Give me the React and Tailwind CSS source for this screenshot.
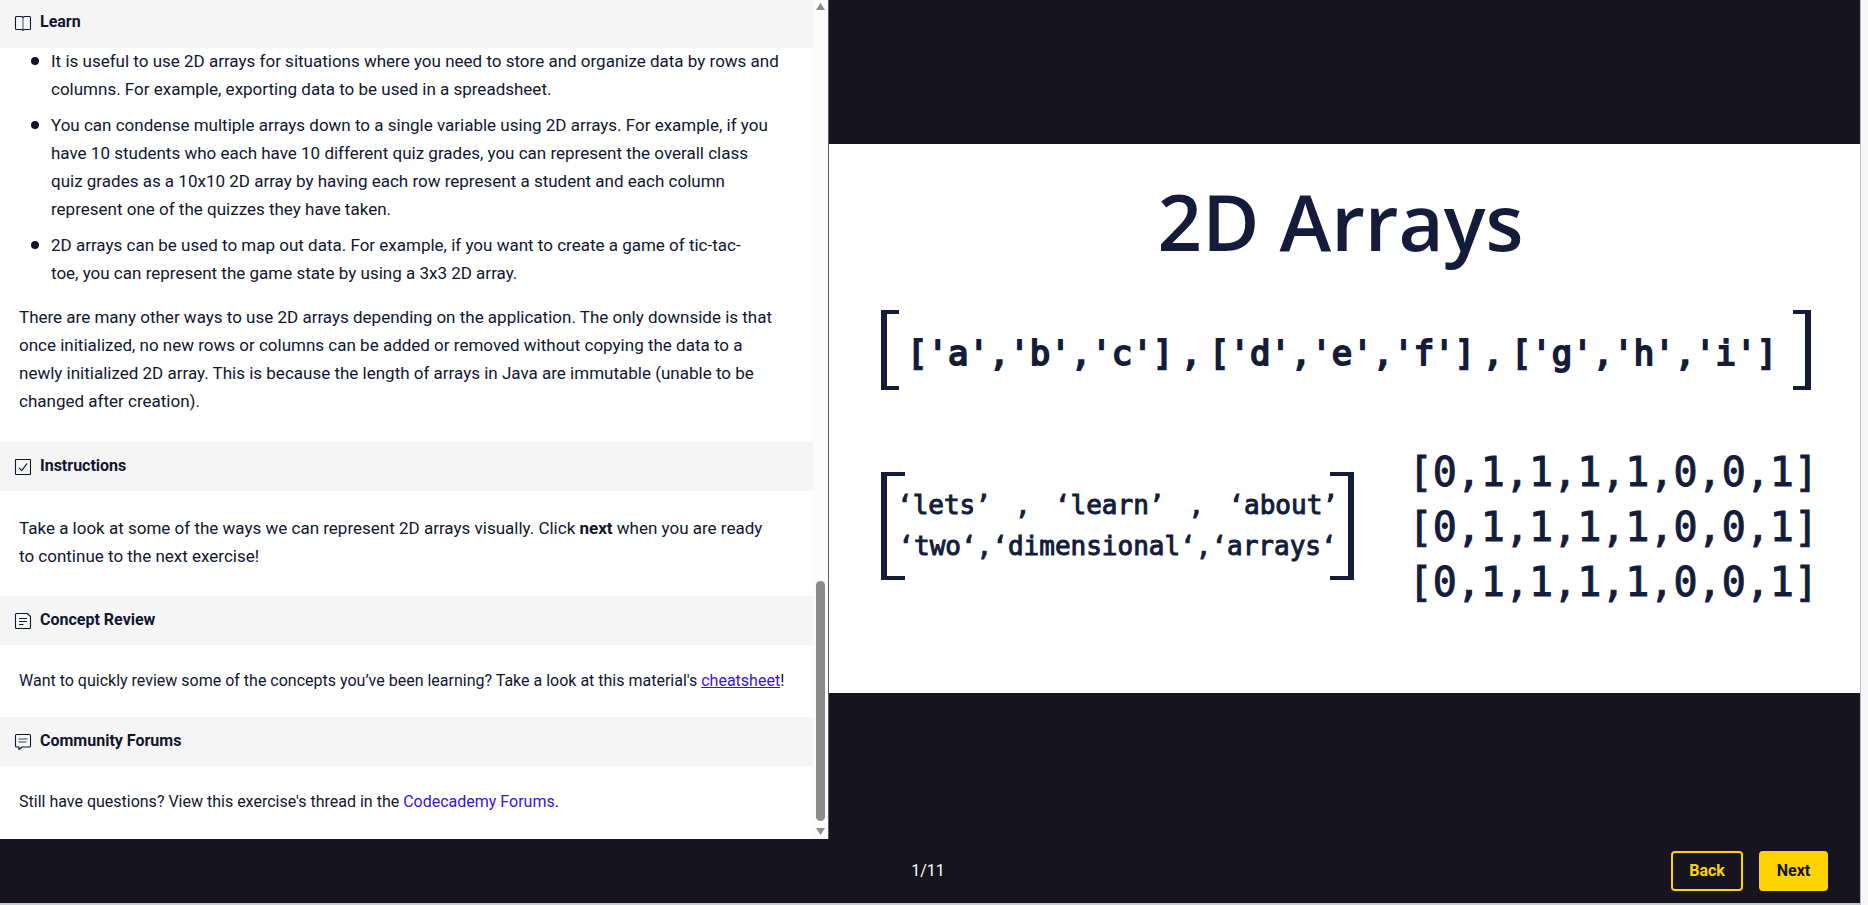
import React from "react";

const iconProps = {
  width: 18,
  height: 18,
  viewBox: "0 0 18 18",
  fill: "none",
  stroke: "#10162f",
  strokeWidth: 1.1,
  strokeLinejoin: "round",
  strokeLinecap: "round",
  "aria-hidden": true,
};

function BookIcon() {
  return (
    <svg {...iconProps}>
      <path d="M9 3.5C8.6 2.8 7.8 2.5 6.8 2.5H2.5a1 1 0 0 0-1 1v11a1 1 0 0 0 1 1H7c1 0 1.6.2 2 .7.4-.5 1-.7 2-.7h4.5a1 1 0 0 0 1-1v-11a1 1 0 0 0-1-1h-4.3C10.2 2.5 9.4 2.8 9 3.5Z" />
      <path d="M9 3.5V16" strokeOpacity="0.7" />
    </svg>
  );
}

function CheckIcon() {
  return (
    <svg {...iconProps}>
      <rect x="1.5" y="1.5" width="15" height="15" rx="0.5" />
      <path d="M5.2 10.2 7.7 12.7 12.8 5.8" />
    </svg>
  );
}

function NoteIcon() {
  return (
    <svg {...iconProps}>
      <path d="M2.5 1.5H13.2L16.5 4.5V15.5a1 1 0 0 1-1 1H2.5a1 1 0 0 1-1-1V2.5a1 1 0 0 1 1-1Z" />
      <path d="M5.5 6.5h7M5.5 9.5h7M5.5 12.5h3.5" />
    </svg>
  );
}

function ForumIcon() {
  return (
    <svg {...iconProps}>
      <path d="M2.5 1.5h13a1 1 0 0 1 1 1v10.5a1 1 0 0 1-1 1H8L5 16.5V14H2.5a1 1 0 0 1-1-1V2.5a1 1 0 0 1 1-1Z" />
      <path d="M4.5 6h9M4.5 9h8" strokeWidth="1.6" strokeOpacity="0.55" strokeLinecap="butt" />
    </svg>
  );
}

function SectionHeader({ icon, children }) {
  return (
    <h2 className="flex h-[49px] shrink-0 items-center gap-2 bg-[#f5f5f5] px-3.5 text-base font-bold">
      {icon}
      <span className="pb-0.5">{children}</span>
    </h2>
  );
}

function Bullet({ children }) {
  return (
    <li className="relative pl-8">
      <span className="absolute top-2.5 left-3 size-2 rounded-full bg-[#10162f]" />
      {children}
    </li>
  );
}

function Scrollbar() {
  return (
    <div className="flex w-[15px] shrink-0 flex-col items-center justify-between bg-[#fcfcfc] pt-[3px] pb-1" aria-hidden="true">
      <svg width="9" height="7" viewBox="0 0 9 7" fill="#8b8b8b"><path d="M4.5 0 9 7H0Z" /></svg>
      <div className="flex w-[9px] grow flex-col justify-end py-[7px]">
        <div className="h-[240px] rounded-full bg-[#8b8b8b]" />
      </div>
      <svg width="9" height="7" viewBox="0 0 9 7" fill="#8b8b8b"><path d="M4.5 7 9 0H0Z" /></svg>
    </div>
  );
}

function LessonPane() {
  return (
    <section className="flex min-h-0 min-w-0 border-r border-[#585c6d] bg-white">
      <div className="flex min-w-0 grow flex-col overflow-hidden">
        <h2 className="flex h-12 shrink-0 items-center gap-2 bg-[#f5f5f5] px-3.5 pb-0.5 text-base font-bold">
          <BookIcon />
          <span className="pb-0.5">Learn</span>
        </h2>
        <div className="-mt-px pr-8 pb-[27px] pl-[19px] text-[17px] leading-[28px]">
          <ul className="mb-4 flex flex-col gap-2">
            <Bullet>
              It is useful to use 2D arrays for situations where you need to store and organize data by rows and columns. For example, exporting data to be used in a spreadsheet.
            </Bullet>
            <Bullet>
              You can condense multiple arrays down to a single variable using 2D arrays. For example, if you have 10 students who each have 10 different quiz grades, you can represent the overall class quiz grades as a 10x10 2D array by having each row represent a student and each column represent one of the quizzes they have taken.
            </Bullet>
            <Bullet>
              2D arrays can be used to map out data. For example, if you want to create a game of tic-tac-toe,{"\u00a0"}you can represent the game state by using a 3x3 2D array.
            </Bullet>
          </ul>
          <p>
            There are many other ways to use 2D arrays depending on the application. The only downside is that once initialized, no new rows or columns can be added or removed without copying the data to a newly initialized 2D array. This is because the length of arrays in Java are immutable (unable to be changed{"\u00a0"}after creation).
          </p>
        </div>

        <SectionHeader icon={<CheckIcon />}>Instructions</SectionHeader>
        <p className="pt-[23px] pr-8 pb-[26px] pl-[19px] text-[17px] leading-[28px]">
          Take a look at some of the ways we can represent 2D arrays visually. Click <strong>next</strong> when you are ready to{"\u00a0"}continue to the next exercise!
        </p>

        <SectionHeader icon={<NoteIcon />}>Concept Review</SectionHeader>
        <p className="px-[19px] py-6 text-base">
          Want to quickly review some of the concepts you’ve been learning? Take a look at this material's{" "}
          <a href="#cheatsheet" className="text-[#3a10e5] underline">cheatsheet</a>!
        </p>

        <SectionHeader icon={<ForumIcon />}>Community Forums</SectionHeader>
        <p className="px-[19px] py-6 text-base">
          Still have questions? View this exercise's thread in the{" "}
          <a href="#forums" className="text-[#3a10e5]">Codecademy Forums</a>.
        </p>
      </div>
      <Scrollbar />
    </section>
  );
}

function Bracketed({ className, edge, children }) {
  return (
    <div className={"flex " + className}>
      <span className={"shrink-0 border-y-4 border-l-[6px] border-[#141c3a] " + edge} />
      {children}
      <span className={"shrink-0 border-y-4 border-r-[6px] border-[#141c3a] " + edge} />
    </div>
  );
}

function Slide() {
  return (
    <figure className="flex aspect-[1031/549] w-full flex-col bg-white font-['DejaVu_Sans_Mono',monospace] text-[#141c3a]">
      <h1 className="mt-[37px] pr-2 text-center font-['Open_Sans',sans-serif] text-[78px] leading-[80px] font-semibold">
        2D Arrays
      </h1>
      <Bracketed className="mt-[49px] mr-[49px] ml-[52px] h-20" edge="w-[18px]">
        <div className="flex grow items-center justify-between pt-1.5 pr-4 pl-2 text-[34px] [-webkit-text-stroke:2px_#141c3a]">
          <span>['a','b','c']</span>
          <span>,</span>
          <span>['d','e','f']</span>
          <span>,</span>
          <span>['g','h','i']</span>
        </div>
      </Bracketed>
      <div className="mt-[55px] mr-[42px] ml-[52px] flex items-start justify-between">
        <Bracketed className="mt-[27px] h-[108px] w-[473px]" edge="w-6">
          <div className="-mx-2 flex grow flex-col justify-center leading-[41px] [-webkit-text-stroke:1px_#141c3a]">
            <div className="flex justify-between text-[26px]">
              <span>‘lets’</span>
              <span>,</span>
              <span>‘learn’</span>
              <span>,</span>
              <span>‘about’</span>
            </div>
            <div className="flex justify-center text-[26px] whitespace-nowrap">‘two‘,‘dimensional‘,‘arrays‘</div>
          </div>
        </Bracketed>
        <div className="text-[40px] leading-[55px] [-webkit-text-stroke:1px_#141c3a]">
          <p>[0,1,1,1,1,0,0,1]</p>
          <p>[0,1,1,1,1,0,0,1]</p>
          <p>[0,1,1,1,1,0,0,1]</p>
        </div>
      </div>
    </figure>
  );
}

export default function App() {
  return (
    <div className="flex h-screen bg-[#f7f7f7] font-[Roboto,sans-serif] text-[#10162f]">
      <div className="flex min-w-0 grow flex-col border-b-2 border-[#c3ced2] bg-[#15141f]">
        <main className="grid min-h-0 grow grid-cols-[829fr_1031fr]">
          <LessonPane />
          <section className="flex min-w-0 items-center overflow-hidden pb-0.5">
            <Slide />
          </section>
        </main>
        <footer className="grid h-16 shrink-0 grid-cols-3 items-center px-8">
          <span className="col-start-2 pr-1 text-center text-base text-white">1/11</span>
          <div className="flex justify-end gap-4 text-base font-bold">
            <button type="button" className="h-10 w-[72px] rounded border-2 border-[#ffd300] text-[#ffd300]">Back</button>
            <button type="button" className="h-10 w-[69px] rounded border-2 border-[#ffd300] bg-[#ffd300]">Next</button>
          </div>
        </footer>
      </div>
      <div className="w-2 shrink-0 border-l border-[#bdbdbd]" />
    </div>
  );
}
